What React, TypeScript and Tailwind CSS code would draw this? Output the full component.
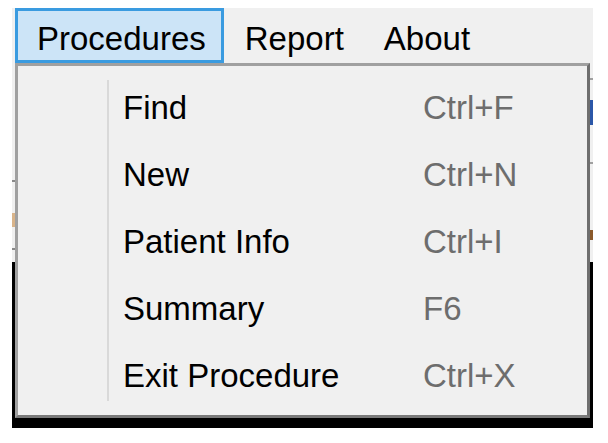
const menus = ["Procedures", "Report", "About"]

const items = [
  { label: "Find", shortcut: "Ctrl+F" },
  { label: "New", shortcut: "Ctrl+N" },
  { label: "Patient Info", shortcut: "Ctrl+I" },
  { label: "Summary", shortcut: "F6" },
  { label: "Exit Procedure", shortcut: "Ctrl+X" },
]

export default function App() {
  return (
    <div
      className="relative h-[443px] w-[608px] overflow-hidden bg-white pt-[8px] text-[33px] text-black"
      style={{ fontFamily: '"Liberation Sans", Arial, sans-serif' }}
    >
      {/* window behind the menu */}
      <div className="ml-[12px] flex w-[581px] flex-col">
        {/* menu bar */}
        <div className="flex h-[55px] bg-[#f0f0f0] pl-[3px]">
          {menus.map((m, i) => (
            <div
              key={m}
              className={
                i === 0
                  ? "h-[55px] border-[3px] border-[#3a9be0] bg-[#cce4f7] pl-[19px] pr-[15px] pt-[6px] leading-[43px]"
                  : "h-[55px] border-[3px] border-transparent pl-[18px] pr-[16px] pt-[6px] leading-[43px]"
              }
            >
              {m}
            </div>
          ))}
        </div>

        {/* toolbar area, mostly hidden by the menu */}
        <div className="flex h-[199px] justify-between bg-[#f0f0f0]">
          <div className="flex w-[20px] flex-col">
            <div className="mt-[117px] h-[2px] bg-[#8a8a8a]" />
            <div className="mt-[31px] h-[14px] bg-[#d9b48a]" />
            <div className="mt-[21px] h-[2px] bg-[#8a8a8a]" />
          </div>
          <div className="flex w-[20px] flex-col">
            <div className="mt-[15px] h-[2px] bg-[#a0a0a0]" />
            <div className="mt-[20px] h-[25px] bg-[#2b57a8]" />
            <div className="mt-[37px] h-[2px] bg-[#a0a0a0]" />
            <div className="mt-[66px] h-[10px] bg-[#8b5a2b]" />
          </div>
        </div>

        {/* dark content */}
        <div className="h-[166px] bg-black" />
      </div>

      {/* dropdown */}
      <div className="absolute left-[15px] top-[63px] flex h-[355px] w-[575px] border-[3px] border-b-[#7a7a7a] border-l-[#a0a0a0] border-r-[#6e6e6e] border-t-[#a0a0a0] bg-[#f0f0f0] py-[8px]">
        <div className="w-[89px] shrink-0" />
        <div className="my-[6px] w-[2px] shrink-0 bg-[#d9d9d9]" />
        <div className="flex flex-col pl-[14px]">
          {items.map((it) => (
            <div key={it.label} className="flex h-[67px] leading-[67px]">
              <span className="w-[300px]">{it.label}</span>
              <span className="text-[#6d6d6d]">{it.shortcut}</span>
            </div>
          ))}
        </div>
      </div>
    </div>
  )
}
